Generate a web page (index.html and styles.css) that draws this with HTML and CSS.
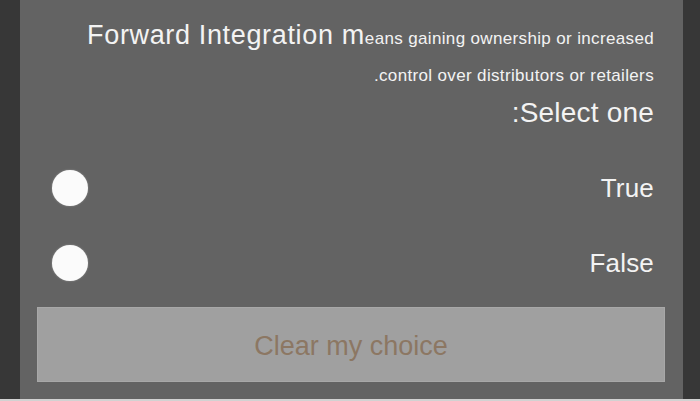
FILE: index.html
```html
<!DOCTYPE html>
<html lang="en">
<head>
<meta charset="utf-8">
<title>Question</title>
<link rel="stylesheet" href="styles.css">
</head>
<body>
<div class="screen">
  <div class="edge edge-left"></div>
  <main class="panel">
    <div class="question">
      <p class="line line-first"><span class="big">Forward Integration m</span><span class="small">eans gaining ownership or increased</span></p>
      <p class="line line-second"><span class="small">.control over distributors or retailers</span></p>
      <p class="line line-prompt">:Select one</p>
    </div>
    <div class="options">
      <label class="option"><span class="radio"></span><span class="option-text">True</span></label>
      <label class="option"><span class="radio"></span><span class="option-text">False</span></label>
    </div>
    <div class="clear-btn">Clear my choice</div>
  </main>
  <div class="edge edge-right"></div>
</div>
</body>
</html>
```
FILE: styles.css
```css
html, body {
  margin: 0;
  padding: 0;
  background: #383838;
}

body {
  width: 700px;
  height: 401px;
  overflow: hidden;
  font-family: "Liberation Sans", Arial, sans-serif;
}

.screen {
  display: flex;
  height: 399px;
  border-bottom: 2px solid #d2d2d2;
}

.edge {
  background: #373737;
}

.edge-left {
  width: 20px;
}

.edge-right {
  width: 17px;
}

.panel {
  flex: 1;
  background: #636363;
  display: flex;
  flex-direction: column;
  padding: 0 29px 0 32px;
  color: #f3f3f3;
}

.question {
  display: flex;
  flex-direction: column;
  text-align: right;
}

.line {
  margin: 0;
  white-space: nowrap;
}

.line-first {
  padding-top: 20px;
  line-height: 30px;
  height: 30px;
}

.big {
  font-size: 27px;
  letter-spacing: 0.65px;
}

.small {
  font-size: 17px;
  letter-spacing: 0.35px;
}

.line-second {
  margin-top: 16px;
  line-height: 20px;
  height: 20px;
}

.line-prompt {
  margin-top: 11px;
  font-size: 28px;
  line-height: 32px;
  height: 32px;
  letter-spacing: 0.2px;
}

.options {
  display: flex;
  flex-direction: column;
  gap: 39px;
  margin-top: 41px;
}

.option {
  display: flex;
  align-items: center;
  justify-content: space-between;
  height: 36px;
}

.radio {
  width: 36px;
  height: 36px;
  border-radius: 50%;
  background: #fbfbfb;
  box-shadow: 0 0 2px rgba(255, 255, 255, 0.35);
}

.option-text {
  font-size: 26px;
  line-height: 30px;
  letter-spacing: 0.2px;
}

.clear-btn {
  margin: 26px -11px 0 -15px;
  height: 75px;
  background: #a0a0a0;
  border: 1px solid #a8a8a8;
  display: flex;
  align-items: center;
  justify-content: center;
  font-size: 27px;
  color: #8c7763;
  padding-top: 3px;
  box-sizing: border-box;
}
```
